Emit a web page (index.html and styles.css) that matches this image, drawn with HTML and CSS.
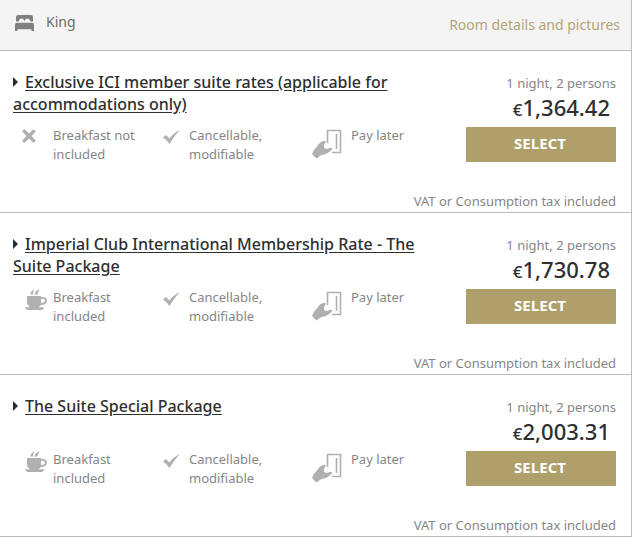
FILE: index.html
```html
<!DOCTYPE html>
<html lang="en">
<head>
<meta charset="utf-8">
<title>King suite rates</title>
<link rel="stylesheet" href="styles.css">
</head>
<body>
<svg class="sprite" aria-hidden="true">
  <symbol id="cross" viewBox="0 0 12 12"><path d="M2 2l8 8M10 2l-8 8" fill="none" stroke="currentColor" stroke-width="3" stroke-linecap="round"/></symbol>
  <symbol id="check" viewBox="0 0 17 14"><path d="M0 7.500l3-2.500 3.500 3.500Q10 3 17 0q-5 5-10.500 14Q4 10 0 7.500z" fill="currentColor"/></symbol>
  <symbol id="cup" viewBox="0 0 22 22"><path d="M5.500 5.500q-.5-3 4-5-1.500 2-1.500 5zM9.500 5.500q.5-4 5.500-5.500-2.500 2-2.500 5.500zM2 7h14v1q6-.7 6 3.500 0 4-6.500 4.700-.7 1.300-2.300 2H19q-.5 2.800-3 2.800H4q-3 0-4-2.800h5.200Q2 16.500 2 13zM16 9.700v4.500q4-.5 4-2.700t-4-1.800z" fill="currentColor" fill-rule="evenodd"/></symbol>
  <symbol id="pay" viewBox="0 0 30 30"><path d="M15.500 14V1.500h13v22H20M24.500 5v15" fill="none" stroke="currentColor" stroke-width="1.600"/><path d="M0 25q1-4 5-7.500 2.500-5 8-5.700 1.500 1-.8 3.700-1 3 1 4.200 2 .5 4.300-.7h2.700q.5 1.200-1.700 3l-4.500 3q-3.500.5-5.500 1.500L4.500 29.500z" fill="currentColor"/></symbol>
</svg>
<main class="room">
  <header class="room-head">
    <h2 class="bed">
      <svg class="bed-icon" viewBox="0 0 19 16" aria-hidden="true"><path d="M1 6.500V2Q1 0 3 0h13q2 0 2 2v4.500h-2.500L14 3.800h-3L9.500 6 8 3.800H5L3.500 6.500zM2 7.800h15q2 0 2 2V16h-2.500v-1.800h-14V16H0V9.800q0-2 2-2z" fill="currentColor"/></svg>
      King
    </h2>
    <a class="details" href="#">Room details and pictures</a>
  </header>

  <section class="rate">
    <div class="info">
      <h3 class="title"><a href="#">Exclusive ICI member suite rates (applicable for accommodations only)</a></h3>
      <ul class="features">
        <li><svg class="icon cross"><use href="#cross"/></svg><span>Breakfast not included</span></li>
        <li><svg class="icon check"><use href="#check"/></svg><span>Cancellable, modifiable</span></li>
        <li><svg class="icon pay"><use href="#pay"/></svg><span>Pay later</span></li>
      </ul>
    </div>
    <div class="offer">
      <p class="stay">1 night, 2 persons</p>
      <p class="price"><small>€</small>1,364.42</p>
      <button class="select" type="button">SELECT</button>
    </div>
    <p class="tax">VAT or Consumption tax included</p>
  </section>

  <section class="rate">
    <div class="info">
      <h3 class="title"><a href="#">Imperial Club International Membership Rate - The Suite Package</a></h3>
      <ul class="features">
        <li><svg class="icon cup"><use href="#cup"/></svg><span>Breakfast included</span></li>
        <li><svg class="icon check"><use href="#check"/></svg><span>Cancellable, modifiable</span></li>
        <li><svg class="icon pay"><use href="#pay"/></svg><span>Pay later</span></li>
      </ul>
    </div>
    <div class="offer">
      <p class="stay">1 night, 2 persons</p>
      <p class="price"><small>€</small>1,730.78</p>
      <button class="select" type="button">SELECT</button>
    </div>
    <p class="tax">VAT or Consumption tax included</p>
  </section>

  <section class="rate">
    <div class="info">
      <h3 class="title"><a href="#">The Suite Special Package</a></h3>
      <ul class="features">
        <li><svg class="icon cup"><use href="#cup"/></svg><span>Breakfast included</span></li>
        <li><svg class="icon check"><use href="#check"/></svg><span>Cancellable, modifiable</span></li>
        <li><svg class="icon pay"><use href="#pay"/></svg><span>Pay later</span></li>
      </ul>
    </div>
    <div class="offer">
      <p class="stay">1 night, 2 persons</p>
      <p class="price"><small>€</small>2,003.31</p>
      <button class="select" type="button">SELECT</button>
    </div>
    <p class="tax">VAT or Consumption tax included</p>
  </section>
</main>
</body>
</html>
```

FILE: styles.css
```css
* { box-sizing: border-box; }

body {
  margin: 0;
  background: #fff;
  color: #868686;
  font: 13px/19px "Noto Sans", sans-serif;
}

h2, h3, p, ul { margin: 0; padding: 0; }

.sprite { position: absolute; width: 0; height: 0; }

.room {
  margin-right: 2px;
  border-right: 1px solid #bbb;
}

.room-head {
  display: flex;
  justify-content: space-between;
  padding: 11px 11px 11px 15px;
  background: #f4f4f4;
  border-bottom: 1px solid #bbb;
  line-height: 22px;
}

.bed {
  display: flex;
  align-items: center;
  align-self: flex-start;
  gap: 12px;
  color: #6c6c6c;
  font-size: 14px;
  font-weight: 400;
}

.bed-icon { width: 19px; height: 16px; margin-top: 2px; color: #808080; }

.details {
  padding-top: 3px;
  height: 28px;
  color: #b5a47a;
  font-size: 14px;
  text-decoration: none;
}

.rate {
  display: grid;
  grid-template-columns: 1fr 150px;
  column-gap: 40px;
  padding: 20px 15px 1px 13px;
  border-bottom: 1px solid #bbb;
}

.title {
  min-height: 44px;
  color: #2f2f2f;
  font-size: 16px;
  font-weight: 500;
  line-height: 22px;
}

.title::before {
  content: "";
  display: inline-block;
  margin: 0 7px 1px 0;
  border: solid transparent;
  border-width: 5px 0 5px 5px;
  border-left-color: #222f38;
}

.title a { color: inherit; text-underline-offset: 2px; }

.features {
  display: grid;
  grid-template-columns: 137px 162px 1fr;
  margin-top: 11px;
  list-style: none;
}

.features li { display: flex; }
.features li:nth-child(1) span { width: 96px; }
.features li:nth-child(2) span { width: 100px; }

.icon { flex: none; color: #b0b0b0; }
.cross { width: 14px; height: 14px; margin: 3px 17px 0 9px; }
.check { width: 17px; height: 14px; margin: 4px 9px 0 13px; }
.cup { width: 22px; height: 22px; margin: 1px 6px 0 12px; }
.pay { width: 30px; height: 30px; margin: 3px 9px 0 0; }

.offer { padding-top: 3px; text-align: right; }

.price {
  padding-right: 6px;
  color: #2f2f2f;
  font-size: 22px;
  font-weight: 500;
  line-height: 28px;
}

.price small { font-size: 17px; line-height: 1; }

.select {
  display: block;
  width: 100%;
  height: 35px;
  margin-top: 6px;
  padding: 0 2px 2px 0;
  border: 0;
  background: #af9f6a;
  color: #fff;
  font: 700 15px/33px "Open Sans", sans-serif;
}

.tax { grid-column: 1 / -1; margin-top: 28px; text-align: right; }
```
